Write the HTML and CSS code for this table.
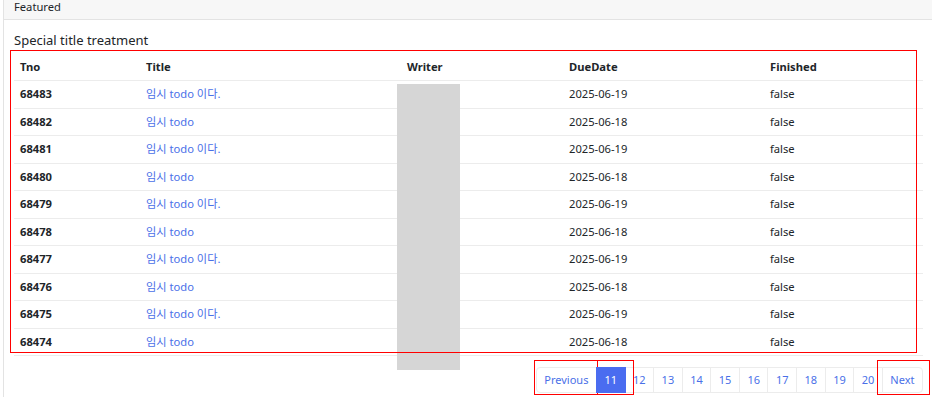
FILE: index.html
```html
<!DOCTYPE html>
<html lang="ko">
<head>
<meta charset="utf-8">
<title>Todo list</title>
<link rel="stylesheet" href="styles.css">
</head>
<body>
<div class="page">
  <div class="card">
    <div class="card-header">Featured</div>
    <div class="card-body">
      <h5 class="card-title">Special title treatment</h5>
      <table class="table">
        <colgroup>
          <col class="c-tno"><col class="c-title"><col class="c-writer"><col class="c-due"><col class="c-fin">
        </colgroup>
        <thead>
          <tr><th>Tno</th><th>Title</th><th>Writer</th><th>DueDate</th><th>Finished</th></tr>
        </thead>
        <tbody>
          <tr><th>68483</th><td><a href="#">임시 todo 이다.</a></td><td></td><td>2025-06-19</td><td>false</td></tr>
          <tr><th>68482</th><td><a href="#">임시 todo</a></td><td></td><td>2025-06-18</td><td>false</td></tr>
          <tr><th>68481</th><td><a href="#">임시 todo 이다.</a></td><td></td><td>2025-06-19</td><td>false</td></tr>
          <tr><th>68480</th><td><a href="#">임시 todo</a></td><td></td><td>2025-06-18</td><td>false</td></tr>
          <tr><th>68479</th><td><a href="#">임시 todo 이다.</a></td><td></td><td>2025-06-19</td><td>false</td></tr>
          <tr><th>68478</th><td><a href="#">임시 todo</a></td><td></td><td>2025-06-18</td><td>false</td></tr>
          <tr><th>68477</th><td><a href="#">임시 todo 이다.</a></td><td></td><td>2025-06-19</td><td>false</td></tr>
          <tr><th>68476</th><td><a href="#">임시 todo</a></td><td></td><td>2025-06-18</td><td>false</td></tr>
          <tr><th>68475</th><td><a href="#">임시 todo 이다.</a></td><td></td><td>2025-06-19</td><td>false</td></tr>
          <tr><th>68474</th><td><a href="#">임시 todo</a></td><td></td><td>2025-06-18</td><td>false</td></tr>
        </tbody>
      </table>
      <ul class="pagination">
        <li class="page-item"><a class="page-link" href="#">Previous</a></li>
        <li class="page-item active"><a class="page-link" href="#">11</a></li>
        <li class="page-item"><a class="page-link" href="#">12</a></li>
        <li class="page-item"><a class="page-link" href="#">13</a></li>
        <li class="page-item"><a class="page-link" href="#">14</a></li>
        <li class="page-item"><a class="page-link" href="#">15</a></li>
        <li class="page-item"><a class="page-link" href="#">16</a></li>
        <li class="page-item"><a class="page-link" href="#">17</a></li>
        <li class="page-item"><a class="page-link" href="#">18</a></li>
        <li class="page-item"><a class="page-link" href="#">19</a></li>
        <li class="page-item"><a class="page-link" href="#">20</a></li>
        <li class="page-item"><a class="page-link" href="#">Next</a></li>
      </ul>
    </div>
  </div>
  <div class="mask mask-writer"></div>
  <div class="hl hl-table"></div>
  <div class="hl hl-prev"></div>
  <div class="hl hl-active"></div>
  <div class="hl hl-next"></div>
</div>
</body>
</html>
```

FILE: styles.css
```css
* { box-sizing: border-box; }
html, body { margin: 0; padding: 0; background: #fff; }
body {
  font-family: "Noto Sans", "Noto Sans CJK KR", sans-serif;
  font-size: 11.2px;
  line-height: 1.5;
  color: #212529;
  overflow: hidden;
}
.page {
  position: relative;
  width: 934px;
  height: 397px;
  overflow: hidden;
  padding-left: 3px;
  padding-right: 2px;
}
.card {
  border: 1px solid #e3e3e3;
  border-top: none;
  border-right: none;
  height: 420px;
  background: #fff;
}
.card-header {
  height: 20px;
  line-height: 14px;
  padding: 0 10px;
  background: #f7f7f7;
  border-bottom: 1px solid #e3e3e3;
  font-size: 11.2px;
  color: #212529;
}
.card-body {
  padding: 11px 9px 0 10px;
}
.card-title {
  margin: 0 0 4px 0;
  font-size: 13px;
  font-weight: 400;
  line-height: 18px;
}
.table {
  width: 100%;
  border-collapse: collapse;
  table-layout: fixed;
  margin-bottom: 11px;
}
.c-tno { width: 126px; }
.c-title { width: 261px; }
.c-writer { width: 162px; }
.c-due { width: 201px; }
.c-fin { width: auto; }
.table th, .table td {
  text-align: left;
  padding: 5px 6px;
  height: 27.5px;
  line-height: 16px;
  border-bottom: 1px solid #ececec;
  vertical-align: middle;
  white-space: nowrap;
}
.table th { font-weight: 700; }
.table a {
  color: #4a70e8;
  text-decoration: none;
}
.pagination {
  display: flex;
  justify-content: flex-end;
  list-style: none;
  margin: 0;
  padding: 0;
}
.page-link {
  display: block;
  padding: 3.5px 7.5px;
  line-height: 16.8px;
  font-size: 11px;
  color: #4a70e8;
  text-decoration: none;
  border: 1px solid #ececec;
  margin-left: -1px;
  background: #fff;
}
.page-item:first-child .page-link { border-radius: 4px 0 0 4px; margin-left: 0; }
.page-item:last-child .page-link { border-radius: 0 4px 4px 0; }
.page-item.active .page-link {
  background: #4a6cf0;
  border-color: #4a6cf0;
  color: #fff;
  position: relative;
  z-index: 1;
}
.mask {
  position: absolute;
  background: #d6d6d6;
}
.mask-writer {
  left: 397px;
  top: 84px;
  width: 63px;
  height: 286px;
}
.hl {
  position: absolute;
  border: 1px solid #ff0000;
  pointer-events: none;
}
.hl-table { left: 10px; top: 50px; width: 907px; height: 303px; }
.hl-prev { left: 534px; top: 360px; width: 64px; height: 35px; }
.hl-active { left: 597px; top: 360px; width: 37px; height: 35px; }
.hl-next { left: 877px; top: 360px; width: 53px; height: 35px; }
```
